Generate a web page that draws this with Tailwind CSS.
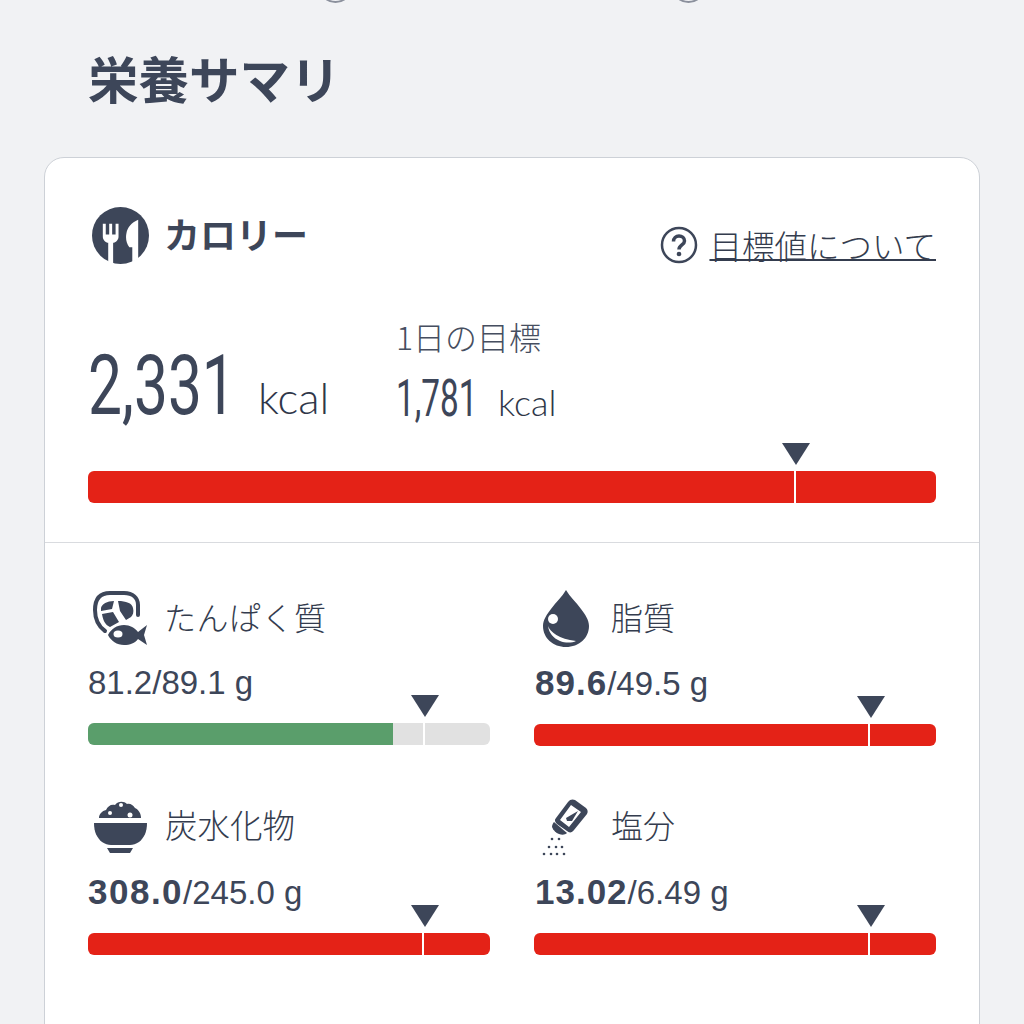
<!DOCTYPE html><html lang="ja">
<head>
  <meta charset="UTF-8" />
  <title>栄養サマリ</title>
  <script src="https://cdn.jsdelivr.net/npm/@tailwindcss/browser@4"></script>
</head>
<body class="bg-[#f1f2f4] h-[1024px] overflow-hidden relative font-['Noto_Sans_CJK_JP','Noto_Sans_CJK_SC',sans-serif] text-[#3d4659]">
  <!-- buttons cut off by the top edge -->
  <div class="absolute left-[318px] top-[-36px] w-[35px] h-[39px] rounded-full border-2 border-[#8b909c]"></div>
  <div class="absolute left-[671px] top-[-36px] w-[35px] h-[39px] rounded-full border-2 border-[#8b909c]"></div>

  <h1 class="pl-[88px] pt-[41px] text-[50.5px] leading-[72px] font-bold">栄養サマリ</h1>

  <div class="mx-[44px] mt-[44px] bg-white border border-[#cdd1d7] rounded-[20px] h-[900px]">
    <!-- calories -->
    <div class="px-[43px] h-[385px] border-b border-[#d9dbdf] relative">
      <div class="flex justify-between">
        <div class="flex items-center gap-[15px] pt-[48px] pl-[4px] h-[106px]">
          <svg class="w-[57px] h-[57px]" viewBox="0 0 58 58">
            <circle cx="29" cy="29" r="29" fill="#3d4659"/>
            <path fill="#fff" d="M11 17h3v11h3.500V17h3v11H24V17h3v13c0 4-3 6-5.500 6.500V57h-5V36.500C14 36 11 34 11 30z"/>
            <path fill="#fff" d="M47 13v40l-6 3V41h-3c-3-4-4-9-3-14 1-6 5-11 12-14z"/>
          </svg>
          <span class="text-[36px] leading-[48px] font-bold -mt-[4px]">カロリー</span>
        </div>
        <div class="flex items-center gap-[11px] pt-[65px] h-[109px]">
          <svg class="w-[38px] h-[38px]" viewBox="0 0 38 38">
            <circle cx="19" cy="19" r="17" fill="none" stroke="#3d4659" stroke-width="2.500"/>
            <path fill="none" stroke="#3d4659" stroke-width="3.500" d="M13.500 15.500c0-3.500 2.500-5.500 5.500-5.500s5.500 2 5.500 5c0 4-5.500 4-5.500 8.500"/>
            <circle cx="19" cy="28" r="2.300" fill="#3d4659"/>
          </svg>
          <a class="text-[32.5px] leading-[44px] font-light text-[#343c4e] underline underline-offset-[0px] decoration-2">目標値について</a>
        </div>
      </div>

      <div class="flex items-end mt-[47px]">
        <div class="w-[308px] flex items-baseline">
          <span class="font-['Roboto'] font-normal text-[84px] leading-[90px] w-[170px] inline-block origin-left scale-x-[0.72] whitespace-nowrap relative top-[3px]">2,331</span>
          <span class="font-['Lato',sans-serif] font-light text-[44px] leading-[50px] text-[#2f3749] relative top-[3px]">kcal</span>
        </div>
        <div>
          <div class="text-[32px] leading-[44px] font-light text-[#464e60]">1日の目標</div>
          <div class="flex items-baseline h-[58px] mt-[12px]">
            <span class="font-['Roboto'] font-normal text-[52px] leading-[58px] w-[102px] inline-block origin-left scale-x-[0.64] whitespace-nowrap">1,781</span>
            <span class="font-['Lato',sans-serif] font-light text-[36px] leading-[50px] text-[#2f3749]">kcal</span>
          </div>
        </div>
      </div>

      <div class="relative mt-[43px] h-[32px] rounded-[6px] bg-[#e42217]">
        <div class="absolute left-[706px] top-0 w-[2px] h-full bg-white"></div>
        <div class="absolute left-[694px] top-[-28px] w-0 h-0 border-x-[14px] border-x-transparent border-t-[22px] border-t-[#3d4659]"></div>
      </div>
    </div>

    <!-- nutrients -->
    <div class="grid grid-cols-2 gap-x-[44px] px-[43px] pt-[45px]">
      <div class="h-[209px]">
        <div class="flex items-center gap-[12px] h-[60px]">
          <svg class="w-[64px] h-[60px]" viewBox="0 0 64 60">
            <path fill="none" stroke="#3d4659" stroke-width="4" stroke-linecap="round" d="M17 43C10 38 7 31 7 22c0-11 5-17 15-17h14c9 0 14 5 14 12v10"/>
            <path fill="#3d4659" d="M13 20c1-4 6-7 13-7l-2 8-11 2zM30 13c8 0 14 2 15 7 1 4 0 7-2 9l-5 3-6-9zM14 26l11-2 6 10-9 5c-5-2-7-7-8-13z"/>
            <path fill="#3d4659" d="M20 47c3-6 9-10 16-10 6 0 11 3 14 7l9-7-3 10 3 10-9-6c-3 4-8 6-14 6-7 0-13-4-16-10z"/>
            <ellipse cx="30" cy="46" rx="4.500" ry="3.500" fill="#fff"/>
          </svg>
          <span class="text-[32px] leading-[44px] font-light text-[#343c4e] tracking-[0.5px] -mt-[4px]">たんぱく質</span>
        </div>
        <div class="font-['Liberation_Sans'] text-[33px] leading-[40px] mt-[15px]">81.2/89.1 g</div>
        <div class="relative mt-[20px] h-[22px] rounded-[6px] bg-[#e1e1e1]">
          <div class="absolute left-0 top-0 h-full w-[305px] rounded-l-[6px] bg-[#5a9e6b]"></div>
          <div class="absolute left-[335px] top-0 w-[2px] h-full bg-white"></div>
          <div class="absolute left-[323px] top-[-28px] w-0 h-0 border-x-[14px] border-x-transparent border-t-[22px] border-t-[#3d4659]"></div>
        </div>
      </div>
      <div class="h-[209px]">
        <div class="flex items-center gap-[17px] h-[60px]">
          <svg class="w-[60px] h-[60px]" viewBox="0 0 60 60">
            <path fill="#3d4659" d="M32 2c4 7 10 12 15 19 4 5 8 11 8 17 0 12-10 21-23 21S9 50 9 38c0-6 4-12 8-17C22 14 28 9 32 2z"/>
            <circle cx="19" cy="31" r="5" fill="#fff"/>
            <path fill="#fff" d="M14 38c2 6 11 13 28 15-4 2-11 2-16 0-7-3-11-8-12-15z"/>
          </svg>
          <span class="text-[32px] leading-[44px] font-light text-[#343c4e] -mt-[4px]">脂質</span>
        </div>
        <div class="font-['Liberation_Sans'] text-[33px] leading-[40px] mt-[15px]"><b class="text-[35px] tracking-[1px] pl-[1px]">89.6</b>/49.5 g</div>
        <div class="relative mt-[20px] h-[22px] rounded-[6px] bg-[#e42217]">
          <div class="absolute left-[334px] top-0 w-[2px] h-full bg-white"></div>
          <div class="absolute left-[323px] top-[-28px] w-0 h-0 border-x-[14px] border-x-transparent border-t-[22px] border-t-[#3d4659]"></div>
        </div>
      </div>
      <div class="h-[209px]">
        <div class="flex items-center gap-[17px] h-[60px]">
          <svg class="w-[60px] h-[60px]" viewBox="0 0 60 60">
            <path fill="#3d4659" d="M11 21c0-4 3-7 7-8 2-4 5-6 9-5 3-4 9-4 12-1 3-1 6 1 8 4 4 2 6 6 6 10z"/>
            <circle cx="33" cy="8" r="2" fill="#fff"/><circle cx="22" cy="16" r="2" fill="#fff"/><circle cx="42" cy="18" r="2.500" fill="#fff"/>
            <path fill="#3d4659" d="M6 26h53c0 9-3 15-8 19-3 2-6 3-9 3H23c-3 0-6-1-9-3-5-4-8-10-8-19z"/>
            <path fill="#3d4659" d="M19 51h26l-3 5H22z"/>
          </svg>
          <span class="text-[32.5px] leading-[44px] font-light text-[#343c4e] -mt-[6px]">炭水化物</span>
        </div>
        <div class="font-['Liberation_Sans'] text-[33px] leading-[40px] mt-[15px]"><b class="text-[35px] tracking-[1.5px]">308.0</b>/245.0 g</div>
        <div class="relative mt-[20px] h-[22px] rounded-[6px] bg-[#e42217]">
          <div class="absolute left-[334px] top-0 w-[2px] h-full bg-white"></div>
          <div class="absolute left-[323px] top-[-28px] w-0 h-0 border-x-[14px] border-x-transparent border-t-[22px] border-t-[#3d4659]"></div>
        </div>
      </div>
      <div class="h-[209px]">
        <div class="flex items-center gap-[17px] h-[60px]">
          <svg class="w-[60px] h-[60px]" viewBox="-5 1 60 60">
            <path fill="#3d4659" fill-rule="evenodd" d="M29 6c2-3 5-3 7-2l11 8c2 2 2 4 1 6L35 34c-2 3-5 3-7 1L18 28c-2-2-3-4-1-6zM32 9 21 24l9 7 12-15z"/>
            <path fill="#3d4659" d="M27 22l12-7-6 10-5 0z"/>
            <path fill="#3d4659" d="M15 26l13 11c-2 2-5 2-8 1-3-1-6-4-7-7 0-2 1-4 2-5z"/>
            <g fill="#3d4659"><circle cx="13" cy="43" r="1.300"/><circle cx="20" cy="43" r="1.300"/><circle cx="10" cy="51" r="1.300"/><circle cx="17" cy="51" r="1.300"/><circle cx="23" cy="51" r="1.300"/><circle cx="5" cy="58" r="1.300"/><circle cx="12" cy="58" r="1.300"/><circle cx="18" cy="58" r="1.300"/><circle cx="25" cy="58" r="1.300"/></g>
          </svg>
          <span class="text-[32px] leading-[44px] font-light text-[#343c4e] -mt-[6px]">塩分</span>
        </div>
        <div class="font-['Liberation_Sans'] text-[33px] leading-[40px] mt-[15px]"><b class="text-[35px] tracking-[1px] pl-[1px]">13.02</b>/6.49 g</div>
        <div class="relative mt-[20px] h-[22px] rounded-[6px] bg-[#e42217]">
          <div class="absolute left-[334px] top-0 w-[2px] h-full bg-white"></div>
          <div class="absolute left-[323px] top-[-28px] w-0 h-0 border-x-[14px] border-x-transparent border-t-[22px] border-t-[#3d4659]"></div>
        </div>
      </div>
    </div>
  </div>
</body>
</html>
